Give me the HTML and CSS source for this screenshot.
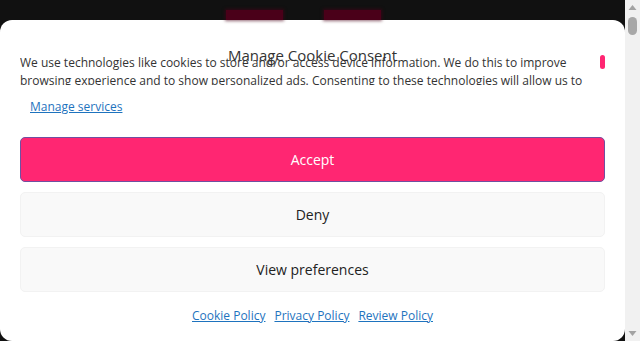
FILE: index.html
```html
<!DOCTYPE html>
<html lang="en">
<head>
<meta charset="utf-8">
<title>Manage Cookie Consent</title>
<link rel="stylesheet" href="styles.css">
</head>
<body>
<div class="main">
  <div class="page-top">
    <span class="blob"></span>
    <span class="blob"></span>
  </div>
  <div class="cookie-modal">
    <div class="cm-header">
      <span></span>
      <div class="cm-title">Manage Cookie Consent</div>
      <span class="cm-close"></span>
    </div>
    <div class="cm-message">We use technologies like cookies to store and/or access device information. We do this to improve browsing experience and to show personalized ads. Consenting to these technologies will allow us to process data such as browsing behavior or unique IDs on this site. Not consenting or withdrawing consent, may adversely affect certain features and functions.</div>
    <a class="cm-manage" href="#">Manage services</a>
    <div class="cm-buttons">
      <button class="cm-btn cm-accept">Accept</button>
      <button class="cm-btn">Deny</button>
      <button class="cm-btn">View preferences</button>
    </div>
    <div class="cm-links">
      <a href="#">Cookie Policy</a>
      <a href="#">Privacy Policy</a>
      <a href="#">Review Policy</a>
    </div>
  </div>
</div>
<div class="scrollbar">
  <svg class="sb-arrow" width="15" height="15" viewBox="0 0 15 15"><path d="M3.5 10 L7.5 5 L11.5 10 Z" fill="#a3a3a3"/></svg>
  <div class="sb-track"><div class="sb-thumb"></div></div>
  <svg class="sb-arrow" width="15" height="15" viewBox="0 0 15 15"><path d="M3.5 5 L11.5 5 L7.5 10 Z" fill="#a3a3a3"/></svg>
</div>
</body>
</html>
```
FILE: styles.css
```css
html, body {
  margin: 0;
  padding: 0;
}
body {
  background: #111111;
  font-family: "Open Sans", "DejaVu Sans", sans-serif;
  color: #333333;
  height: 100vh;
  overflow: hidden;
  display: flex;
}
.main {
  flex: 1;
  min-width: 0;
}
.scrollbar {
  width: 15px;
  height: 100vh;
  background: #f1f1f1;
  display: flex;
  flex-direction: column;
}
.sb-arrow {
  display: block;
  flex: none;
}
.sb-track {
  flex: 1;
  padding: 2px 3px 0;
}
.sb-thumb {
  height: 18px;
  border-radius: 5px;
  background: #a8a8a8;
}
.page-top {
  height: 20px;
  box-sizing: border-box;
  padding: 10px 0 0 226px;
  display: flex;
  gap: 41px;
}
.blob {
  display: block;
  width: 57px;
  height: 10px;
  background: #4a0019;
  box-shadow: 0 0 3px 1px rgba(74, 0, 25, 0.6);
}
.cookie-modal {
  background: #ffffff;
  border-radius: 12px;
  height: 321px;
  box-sizing: border-box;
  padding: 25px 20px 0;
}
.cm-header {
  display: grid;
  grid-template-columns: 1fr auto 1fr;
  height: 20px;
  align-items: start;
}
.cm-title {
  font-size: 15px;
  line-height: 20px;
  color: #333333;
  text-align: center;
}
.cm-close {
  justify-self: end;
  width: 5px;
  height: 14px;
  margin-top: 10px;
  border-radius: 3px;
  background: #ff2672;
}
.cm-message {
  margin-top: -11px;
  height: 31px;
  overflow: hidden;
  font-size: 12px;
  line-height: 18px;
  color: #333333;
}
.cm-manage {
  display: block;
  margin: 13px 0 0 10px;
  font-size: 12px;
  line-height: 18px;
  color: #1e73be;
  text-decoration: underline;
  width: max-content;
}
.cm-buttons {
  display: flex;
  flex-direction: column;
  gap: 10px;
  margin-top: 21px;
}
.cm-btn {
  height: 45px;
  width: 100%;
  border: 1px solid #f2f2f2;
  background: #f9f9f9;
  border-radius: 5px;
  font-family: "Open Sans", "DejaVu Sans", sans-serif;
  font-size: 14px;
  color: #222222;
  cursor: pointer;
}
.cm-accept {
  background: #ff2672;
  border-color: #7050a0;
  color: #ffffff;
}
.cm-links {
  display: flex;
  justify-content: center;
  gap: 9px;
  margin-top: 15px;
  font-size: 12px;
  line-height: 18px;
}
.cm-links a {
  color: #1e73be;
  text-decoration: underline;
}
```
